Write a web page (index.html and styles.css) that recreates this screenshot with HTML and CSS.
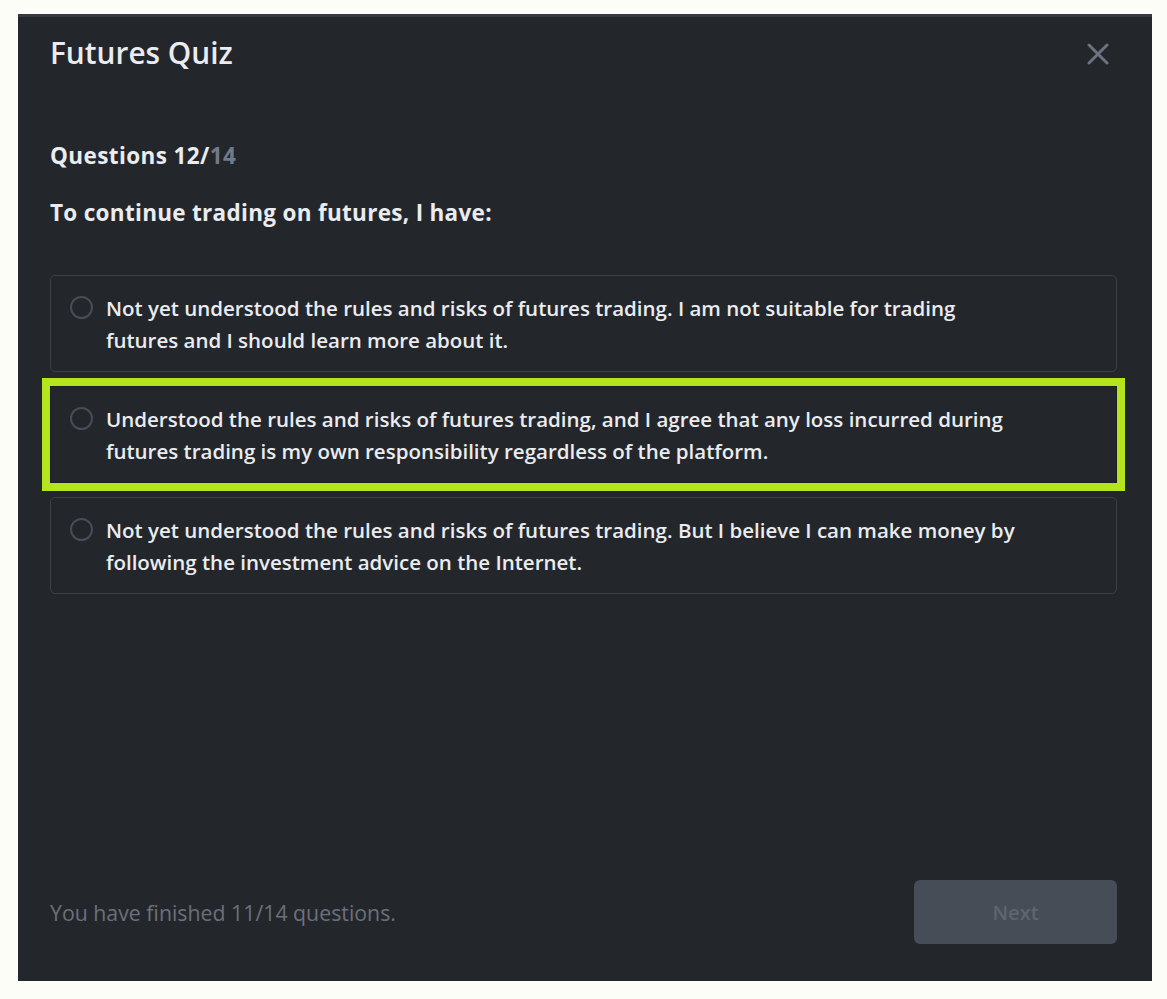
FILE: index.html
```html
<!DOCTYPE html>
<html lang="en">
<head>
<meta charset="utf-8">
<title>Futures Quiz</title>
<link rel="stylesheet" href="styles.css">
</head>
<body>
<div class="modal">
  <div class="modal-header">
    <h1 class="modal-title">Futures Quiz</h1>
    <button class="close-btn" aria-label="Close">
      <svg width="22" height="22" viewBox="0 0 22 22"><path d="M2 2L20 20M20 2L2 20" stroke="#6b7281" stroke-width="3" stroke-linecap="round"/></svg>
    </button>
  </div>
  <div class="modal-body">
    <div class="progress">Questions 12/<span class="muted">14</span></div>
    <div class="question">To continue trading on futures, I have:</div>
    <div class="options">
      <label class="option">
        <span class="radio"></span>
        <span class="option-text">Not yet understood the rules and risks of futures trading. I am not suitable for trading futures and I should learn more about it.</span>
      </label>
      <label class="option option-highlight">
        <span class="radio"></span>
        <span class="option-text">Understood the rules and risks of futures trading, and I agree that any loss incurred during futures trading is my own responsibility regardless of the platform.</span>
      </label>
      <label class="option">
        <span class="radio"></span>
        <span class="option-text">Not yet understood the rules and risks of futures trading. But I believe I can make money by following the investment advice on the Internet.</span>
      </label>
    </div>
  </div>
  <div class="modal-footer">
    <div class="finished">You have finished 11/14 questions.</div>
    <button class="next-btn" disabled>Next</button>
  </div>
</div>
</body>
</html>
```

FILE: styles.css
```css
* { box-sizing: border-box; }
html, body { margin: 0; padding: 0; }
body {
  background: #fdfdf8;
  font-family: "Open Sans", "Liberation Sans", Arial, sans-serif;
  color: #eaecef;
}
.modal {
  margin: 14px 0 0 18px;
  width: 1134px;
  height: 967px;
  background: #23272c;
  border-top: 3px solid #363a40;
  display: flex;
  flex-direction: column;
  padding: 18px 35px 37px 32px;
}
.modal-header {
  display: flex;
  justify-content: space-between;
  align-items: center;
  height: 36px;
}
.modal-title {
  margin: 0;
  font-size: 29.8px;
  line-height: 36px;
  font-weight: 600;
  color: #eaecef;
}
.close-btn {
  background: none;
  border: 0;
  padding: 0;
  width: 22px;
  height: 22px;
  margin-right: 8px;
  margin-top: 2px;
  display: flex;
}
.modal-body {
  flex: 1;
  padding-top: 71px;
}
.progress {
  font-size: 22.5px;
  line-height: 28px;
  font-weight: 700;
  letter-spacing: 0.4px;
}
.muted { color: #707a8a; }
.question {
  margin-top: 29px;
  font-size: 22.5px;
  line-height: 28px;
  font-weight: 700;
  letter-spacing: 0.3px;
}
.options {
  margin-top: 48px;
  display: flex;
  flex-direction: column;
  gap: 14px;
}
.option {
  display: flex;
  align-items: flex-start;
  gap: 13px;
  border: 1px solid #3b4048;
  border-radius: 5px;
  padding: 16px 20px 15px 19px;
  height: 97px;
}
.option-highlight {
  outline: 8px solid #b3e41e;
  outline-offset: 0;
  border-radius: 0;
  border-color: #1c1f23;
}
.radio {
  flex: none;
  width: 23px;
  height: 23px;
  margin-top: 4px;
  border: 2px solid #474d57;
  border-radius: 50%;
}
.option-text {
  font-size: 20.5px;
  line-height: 32px;
  font-weight: 600;
  max-width: 918px;
  color: #eaecef;
}
.modal-footer {
  display: flex;
  justify-content: space-between;
  align-items: center;
}
.finished {
  font-size: 21.3px;
  color: #6b707a;
}
.next-btn {
  width: 203px;
  height: 64px;
  border: 0;
  border-radius: 6px;
  background: #474d57;
  color: #5e6470;
  font-family: "Open Sans", "Liberation Sans", Arial, sans-serif;
  font-size: 20px;
  font-weight: 600;
}
```
